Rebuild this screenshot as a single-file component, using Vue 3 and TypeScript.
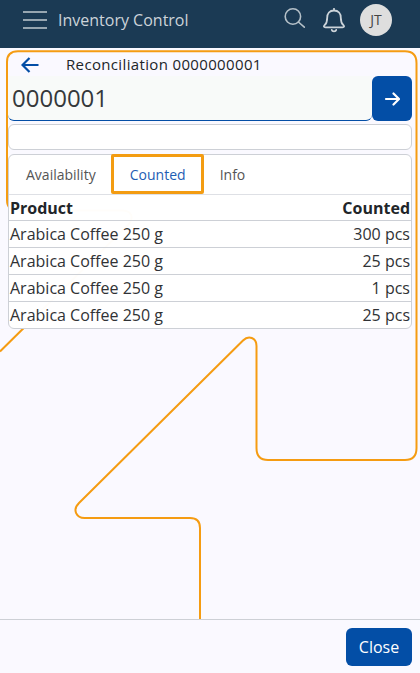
<script setup lang="ts">
import { ref } from 'vue'

interface CountedLine {
  product: string
  counted: string
}

const tabs: string[] = ['Availability', 'Counted', 'Info']
const activeTab = ref('Counted')
const code = ref('0000001')
const lines: CountedLine[] = [
  { product: 'Arabica Coffee 250 g', counted: '300 pcs' },
  { product: 'Arabica Coffee 250 g', counted: '25 pcs' },
  { product: 'Arabica Coffee 250 g', counted: '1 pcs' },
  { product: 'Arabica Coffee 250 g', counted: '25 pcs' },
]
</script>

<template>
  <div class="app">
    <header class="topbar">
      <svg class="menu" width="24" height="20" viewBox="0 0 24 20">
        <path d="M0 2H24M0 10H24M0 18H24" />
      </svg>
      <span class="brand">Inventory Control</span>
      <svg class="search" width="22" height="22" viewBox="0 0 22 22">
        <circle cx="8.900" cy="8.500" r="7.700" />
        <path d="M14.400 14L20.300 19.200" />
      </svg>
      <svg class="bell" width="24" height="26" viewBox="0 0 24 26">
        <path d="M12 .8V2.500M12 2.500C7.500 2.500 5.200 5.700 5.200 9.700C5.200 14 4.100 15.800 2.600 17.200C1.400 18.400 1.900 19.300 3.400 19.300H20.600C22.100 19.300 22.600 18.400 21.400 17.200C19.900 15.800 18.800 14 18.800 9.700C18.800 5.700 16.500 2.500 12 2.500Z" />
        <path d="M9.800 22C10.200 23.700 13.800 23.700 14.200 22" />
      </svg>
      <span class="avatar">JT</span>
    </header>

    <main class="content">
      <svg class="backdrop" width="420" height="571" viewBox="0 48 420 571">
        <path d="M0 351.500L128 225C135 217 131 210.500 122 210.500H18Q7 210.500 7 200V62Q7 51.300 18 51.300H405Q416.500 51.300 416.500 63V448Q416.500 460 405 460H268Q256.500 460 256.500 448V346C256.500 337.500 248.500 335 243 340.500L79 503C72 510 76.500 518 84.500 518H190Q200 518 200 528V619" />
      </svg>
      <div class="panel">
        <div class="title-row">
          <svg class="back" width="18" height="16" viewBox="0 0 18 16">
            <path d="M17.500 8H1.500M8.500 1L1.500 8L8.500 15" />
          </svg>
          <h1>Reconciliation 0000000001</h1>
        </div>
        <div class="scan-row">
          <input v-model="code" class="scan" type="text" />
          <button class="go" type="button">
            <svg width="16" height="14" viewBox="0 0 16 14">
              <path d="M2 7H15M9.500 1.500L15 7L9.500 12.500" />
            </svg>
          </button>
        </div>
        <div class="message"></div>
        <section class="card">
          <nav class="tabs">
            <button
              v-for="tab in tabs"
              :key="tab"
              type="button"
              class="tab"
              :class="{ active: tab === activeTab }"
              @click="activeTab = tab"
            >{{ tab }}</button>
          </nav>
          <div class="row head"><span>Product</span><span>Counted</span></div>
          <div v-for="(line, i) in lines" :key="i" class="row">
            <span>{{ line.product }}</span><span>{{ line.counted }}</span>
          </div>
        </section>
      </div>
    </main>

    <footer class="footer">
      <button class="close" type="button">Close</button>
    </footer>
  </div>
</template>

<style>
body {
  margin: 0;
  overflow: hidden;
}
</style>

<style scoped>
.app {
  display: flex;
  flex-direction: column;
  width: 100%;
  height: 100vh;
  background: #faf9ff;
  color: #212529;
  font-family: 'Open Sans', 'Noto Sans', sans-serif;
  font-size: 16px;
}
.app *,
.app {
  box-sizing: border-box;
}
svg {
  display: block;
  flex: none;
  fill: none;
  stroke-linecap: round;
  stroke-linejoin: round;
}
button,
input {
  margin: 0;
  padding: 0;
  border: 0;
  font-family: inherit;
}
.topbar {
  display: flex;
  flex: none;
  height: 48px;
  padding: 0 28px 0 23px;
  background: #1b3a54;
  color: #ccd3d9;
}
.menu {
  margin-top: 10px;
  stroke: #97a6b1;
  stroke-width: 2;
  stroke-linecap: butt;
}
.brand {
  margin: 8px auto 0 11px;
  font-size: 16px;
  font-weight: 500;
  line-height: 24px;
}
.search {
  margin: 8px 15.500px 0 0;
  stroke: #b5c0c8;
  stroke-width: 1.6;
}
.bell {
  margin: 8px 14.500px 0 0;
  stroke: #ccd3d9;
  stroke-width: 1.8;
}
.avatar {
  width: 32px;
  height: 32px;
  margin-top: 4px;
  border-radius: 50%;
  background: #dedede;
  color: #444;
  font-size: 14px;
  line-height: 32px;
  text-align: center;
}
.content {
  position: relative;
  flex: 1;
  min-height: 0;
}
.backdrop {
  position: absolute;
  top: 0;
  left: 0;
  stroke: #f59c12;
  stroke-width: 2;
  stroke-linecap: butt;
}
.panel {
  position: relative;
  display: flex;
  flex-direction: column;
  padding: 5px 8px 0;
}
.title-row {
  display: flex;
  align-items: center;
  height: 23px;
  padding-left: 13px;
}
.back {
  stroke: #034ea6;
  stroke-width: 2.2;
  stroke-linecap: butt;
  stroke-linejoin: miter;
}
h1 {
  margin: 0 0 0 27px;
  font-size: 15px;
  font-weight: 500;
  line-height: 23px;
  letter-spacing: 0.350px;
}
.scan-row {
  display: flex;
  height: 45px;
}
.scan {
  flex: 1;
  min-width: 0;
  padding: 0 4px 2px;
  border-bottom: 1px solid #034ea6;
  border-radius: 0 0 6px 6px;
  outline: none;
  background: #f8faf9;
  color: #35383b;
  font-size: 24px;
}
.go {
  display: flex;
  align-items: center;
  justify-content: center;
  width: 40px;
  border-radius: 6px;
  background: #034ea6;
}
.go svg {
  stroke: #fff;
  stroke-width: 2.2;
}
.message {
  height: 26px;
  margin-top: 3px;
  border: 1px solid #cdd0d6;
  border-radius: 6px;
  background: #fff;
}
.card {
  margin-top: 4px;
  border: 1px solid #cdd0d6;
  border-radius: 6px;
  background: rgba(255, 255, 255, 0.98);
}
.tabs {
  display: flex;
  height: 40px;
  border-bottom: 1px solid #dee0e5;
}
.tab {
  height: 40px;
  padding: 0 16px;
  background: transparent;
  color: #555;
  font-size: 14px;
  line-height: 40px;
}
.tab:first-child {
  padding: 0 15px 0 17px;
}
.tab.active {
  width: 93px;
  margin-top: -1px;
  padding: 2px 0 0 1px;
  border: 3px solid #f39c12;
  border-radius: 2px;
  color: #1e5db4;
  line-height: 32px;
}
.row {
  display: flex;
  align-items: center;
  justify-content: space-between;
  height: 27px;
  padding: 0 1px;
  border-top: 1px solid #cdd0d6;
  color: #303235;
  line-height: 24px;
}
.row.head {
  height: 25px;
  border-top: 0;
  color: #212529;
  font-weight: 700;
}
.footer {
  display: flex;
  flex: none;
  align-items: flex-start;
  justify-content: flex-end;
  height: 54px;
  padding: 8px 8px 0;
  border-top: 1px solid #cdd0d6;
}
.close {
  width: 66px;
  height: 38px;
  border-radius: 6px;
  background: #034ea6;
  color: #fff;
  font-size: 16px;
}
</style>
